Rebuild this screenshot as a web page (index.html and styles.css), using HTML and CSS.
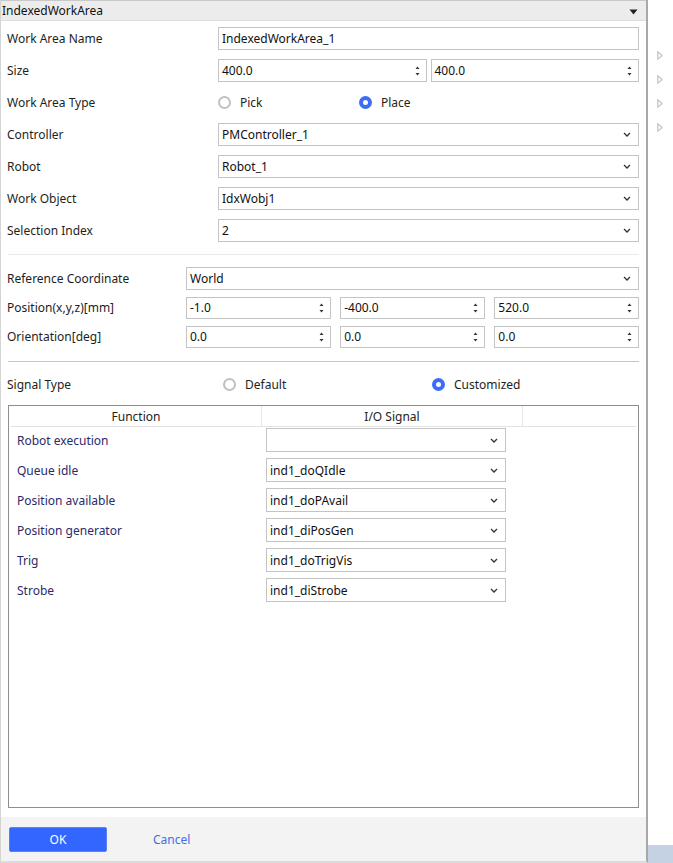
FILE: index.html
```html
<!DOCTYPE html>
<html>
<head>
<meta charset="utf-8">
<link rel="stylesheet" href="styles.css">
</head>
<body>
<div class="app">
  <div class="dialog">
    <div class="titlebar">
      <span class="title">IndexedWorkArea</span>
      <svg class="caret" width="9" height="6" viewBox="0 0 9 6"><path d="M0.5 0.5 L8.5 0.5 L4.5 5.5 Z" fill="#222"/></svg>
    </div>
    <div class="content">
      <div class="form form-a">
        <div class="label">Work Area Name</div>
        <div class="field">IndexedWorkArea_1</div>

        <div class="label">Size</div>
        <div class="pair">
          <div class="field spin">400.0<svg class="spinner" width="5" height="10" viewBox="0 0 5 10"><path d="M2.5 0.5 L4.5 3 L0.5 3 Z M2.5 9.5 L4.5 7 L0.5 7 Z" fill="#333"/></svg></div>
          <div class="field spin">400.0<svg class="spinner" width="5" height="10" viewBox="0 0 5 10"><path d="M2.5 0.5 L4.5 3 L0.5 3 Z M2.5 9.5 L4.5 7 L0.5 7 Z" fill="#333"/></svg></div>
        </div>

        <div class="label">Work Area Type</div>
        <div class="radios radios-a">
          <div class="radio opt-pick"><span class="dot"></span>Pick</div>
          <div class="radio"><span class="dot on"></span>Place</div>
        </div>

        <div class="label">Controller</div>
        <div class="field select">PMController_1<svg class="chev" width="8" height="5" viewBox="0 0 8 5"><path d="M1 1 L4 4 L7 1" fill="none" stroke="#333" stroke-width="1.3"/></svg></div>

        <div class="label">Robot</div>
        <div class="field select">Robot_1<svg class="chev" width="8" height="5" viewBox="0 0 8 5"><path d="M1 1 L4 4 L7 1" fill="none" stroke="#333" stroke-width="1.3"/></svg></div>

        <div class="label">Work Object</div>
        <div class="field select">IdxWobj1<svg class="chev" width="8" height="5" viewBox="0 0 8 5"><path d="M1 1 L4 4 L7 1" fill="none" stroke="#333" stroke-width="1.3"/></svg></div>

        <div class="label">Selection Index</div>
        <div class="field select">2<svg class="chev" width="8" height="5" viewBox="0 0 8 5"><path d="M1 1 L4 4 L7 1" fill="none" stroke="#333" stroke-width="1.3"/></svg></div>
      </div>

      <div class="sep sep-light"></div>

      <div class="form form-b">
        <div class="label">Reference Coordinate</div>
        <div class="field select">World<svg class="chev" width="8" height="5" viewBox="0 0 8 5"><path d="M1 1 L4 4 L7 1" fill="none" stroke="#333" stroke-width="1.3"/></svg></div>

        <div class="label">Position(x,y,z)[mm]</div>
        <div class="triple">
          <div class="field spin">-1.0<svg class="spinner" width="5" height="10" viewBox="0 0 5 10"><path d="M2.5 0.5 L4.5 3 L0.5 3 Z M2.5 9.5 L4.5 7 L0.5 7 Z" fill="#333"/></svg></div>
          <div class="field spin">-400.0<svg class="spinner" width="5" height="10" viewBox="0 0 5 10"><path d="M2.5 0.5 L4.5 3 L0.5 3 Z M2.5 9.5 L4.5 7 L0.5 7 Z" fill="#333"/></svg></div>
          <div class="field spin">520.0<svg class="spinner" width="5" height="10" viewBox="0 0 5 10"><path d="M2.5 0.5 L4.5 3 L0.5 3 Z M2.5 9.5 L4.5 7 L0.5 7 Z" fill="#333"/></svg></div>
        </div>

        <div class="label">Orientation[deg]</div>
        <div class="triple">
          <div class="field spin">0.0<svg class="spinner" width="5" height="10" viewBox="0 0 5 10"><path d="M2.5 0.5 L4.5 3 L0.5 3 Z M2.5 9.5 L4.5 7 L0.5 7 Z" fill="#333"/></svg></div>
          <div class="field spin">0.0<svg class="spinner" width="5" height="10" viewBox="0 0 5 10"><path d="M2.5 0.5 L4.5 3 L0.5 3 Z M2.5 9.5 L4.5 7 L0.5 7 Z" fill="#333"/></svg></div>
          <div class="field spin">0.0<svg class="spinner" width="5" height="10" viewBox="0 0 5 10"><path d="M2.5 0.5 L4.5 3 L0.5 3 Z M2.5 9.5 L4.5 7 L0.5 7 Z" fill="#333"/></svg></div>
        </div>
      </div>

      <div class="sep sep-dark"></div>

      <div class="signal-row">
        <div class="label">Signal Type</div>
        <div class="radio opt-default"><span class="dot"></span>Default</div>
        <div class="radio"><span class="dot on"></span>Customized</div>
      </div>

      <div class="table">
        <div class="thead">
          <div class="th">Function</div>
          <div class="th">I/O Signal</div>
          <div class="th"></div>
        </div>
        <div class="tbody">
          <div class="tr"><div class="td-label">Robot execution</div><div class="field select small"><svg class="chev" width="8" height="5" viewBox="0 0 8 5"><path d="M1 1 L4 4 L7 1" fill="none" stroke="#333" stroke-width="1.3"/></svg></div></div>
          <div class="tr"><div class="td-label">Queue idle</div><div class="field select small">ind1_doQIdle<svg class="chev" width="8" height="5" viewBox="0 0 8 5"><path d="M1 1 L4 4 L7 1" fill="none" stroke="#333" stroke-width="1.3"/></svg></div></div>
          <div class="tr"><div class="td-label">Position available</div><div class="field select small">ind1_doPAvail<svg class="chev" width="8" height="5" viewBox="0 0 8 5"><path d="M1 1 L4 4 L7 1" fill="none" stroke="#333" stroke-width="1.3"/></svg></div></div>
          <div class="tr"><div class="td-label">Position generator</div><div class="field select small">ind1_diPosGen<svg class="chev" width="8" height="5" viewBox="0 0 8 5"><path d="M1 1 L4 4 L7 1" fill="none" stroke="#333" stroke-width="1.3"/></svg></div></div>
          <div class="tr"><div class="td-label">Trig</div><div class="field select small">ind1_doTrigVis<svg class="chev" width="8" height="5" viewBox="0 0 8 5"><path d="M1 1 L4 4 L7 1" fill="none" stroke="#333" stroke-width="1.3"/></svg></div></div>
          <div class="tr"><div class="td-label">Strobe</div><div class="field select small">ind1_diStrobe<svg class="chev" width="8" height="5" viewBox="0 0 8 5"><path d="M1 1 L4 4 L7 1" fill="none" stroke="#333" stroke-width="1.3"/></svg></div></div>
        </div>
      </div>
    </div>
    <div class="footer">
      <button class="btn-ok">OK</button>
      <button class="btn-cancel">Cancel</button>
    </div>
  </div>
  <div class="side">
    <div class="side-items">
      <svg class="tri" width="6" height="9" viewBox="0 0 6 9"><path d="M0.8 0.8 L5.2 4.5 L0.8 8.2 Z" fill="none" stroke="#c4c4c4" stroke-width="1.2"/></svg>
      <svg class="tri" width="6" height="9" viewBox="0 0 6 9"><path d="M0.8 0.8 L5.2 4.5 L0.8 8.2 Z" fill="none" stroke="#c4c4c4" stroke-width="1.2"/></svg>
      <svg class="tri" width="6" height="9" viewBox="0 0 6 9"><path d="M0.8 0.8 L5.2 4.5 L0.8 8.2 Z" fill="none" stroke="#c4c4c4" stroke-width="1.2"/></svg>
      <svg class="tri" width="6" height="9" viewBox="0 0 6 9"><path d="M0.8 0.8 L5.2 4.5 L0.8 8.2 Z" fill="none" stroke="#c4c4c4" stroke-width="1.2"/></svg>
    </div>
    <div class="side-bottom"></div>
  </div>
</div>
</body>
</html>
```

FILE: styles.css
```css
* { box-sizing: border-box; }
html, body { margin: 0; padding: 0; }
body {
  font-family: "Noto Sans", "Open Sans", sans-serif;
  font-size: 12px;
  color: #1e1e1e;
  background: #fff;
}
.app {
  display: flex;
  width: 673px;
  height: 863px;
}
.dialog {
  width: 648px;
  height: 863px;
  display: flex;
  flex-direction: column;
  border-left: 1px solid #d4d4d4;
  border-right: 2px solid #a8a8a8;
  border-bottom: 2px solid #dcdcdc;
}
.titlebar {
  height: 21px;
  background: #ececec;
  border-top: 1px solid #c8c8c8;
  border-bottom: 1px solid #dedede;
  display: flex;
  align-items: center;
  justify-content: space-between;
  padding: 0 8px 0 1px;
}
.title { font-size: 12px; color: #111; }
.caret { margin-top: 3px; }
.content {
  flex: 1;
  display: flex;
  flex-direction: column;
  padding: 6px 7px 9px 6px;
  background: #fff;
}
.form {
  display: grid;
  grid-auto-rows: 23px;
  align-items: center;
}
.form-a {
  grid-template-columns: 211px 1fr;
  row-gap: 9px;
}
.form-b {
  grid-template-columns: 179px 1fr;
  row-gap: 6px;
}
.label { color: #1e1e1e; }
.field {
  height: 23px;
  border: 1px solid #c4c4c4;
  background: #fff;
  display: flex;
  align-items: center;
  padding: 0 0 0 3px;
  position: relative;
  color: #111;
}
.spin { justify-content: space-between; padding-right: 6px; }
.select { justify-content: space-between; padding-right: 7px; }
.chev { flex: none; margin-left: auto; }
.spinner { flex: none; }
.pair {
  display: grid;
  grid-template-columns: 1fr 1fr;
  column-gap: 4px;
}
.triple {
  display: grid;
  grid-template-columns: 1fr 1fr 1fr;
  column-gap: 9.5px;
}
.form-b .triple .field { height: 22px; }
.radios { display: flex; align-items: center; }
.radio { display: flex; align-items: center; color: #1e1e1e; }
.dot {
  width: 13px;
  height: 13px;
  border-radius: 50%;
  border: 2px solid #c0c0c0;
  background: #fff;
  margin-right: 9px;
  flex: none;
}
.dot.on {
  border: 4px solid #3d6cf5;
  background: #fff;
}
.opt-pick { width: 141px; }
.sep { height: 1px; margin: 12px 0 12px 1px; }
.sep-light { background: #e9e9e9; }
.sep-dark { background: #c6c6c6; margin: 13px 0 11px 1px; }
.signal-row {
  display: flex;
  align-items: center;
  height: 23px;
}
.signal-row .label { width: 216px; }
.opt-default { width: 209px; }
.table {
  flex: 1;
  margin-top: 9px;
  margin-left: 1px;
  border: 1px solid #8e8e8e;
  display: flex;
  flex-direction: column;
}
.thead {
  display: grid;
  grid-template-columns: 251px 261px 1fr;
  height: 21px;
  margin: 0 2px;
  border-bottom: 1px solid #e2e2e2;
}
.th {
  display: flex;
  align-items: center;
  justify-content: center;
  border-right: 1px solid #e6e6e6;
  color: #222;
  font-size: 12px;
}
.th:last-child { border-right: none; }
.tbody {
  display: flex;
  flex-direction: column;
  gap: 7px;
  padding-top: 1px;
}
.tr {
  display: grid;
  grid-template-columns: 257px 240px;
  align-items: center;
  height: 23px;
}
.td-label { padding-left: 8px; color: #2a2a6a; }
.field.small { height: 24px; }
.footer {
  height: 44px;
  background: #f3f3f3;
  display: flex;
  align-items: center;
  padding: 0 0 0 8px;
}
.btn-ok {
  width: 98px;
  height: 25px;
  background: #3366ff;
  border: 1px solid #5b82f0;
  border-radius: 2px;
  color: #fff;
  font-family: "Noto Sans", sans-serif;
  font-size: 12px;
  padding: 0;
}
.btn-cancel {
  margin-left: 46px;
  background: none;
  border: none;
  color: #3f6ee8;
  font-family: "Noto Sans", sans-serif;
  font-size: 12px;
  padding: 0;
}
.side {
  flex: 1;
  display: flex;
  flex-direction: column;
  background: #fff;
}
.side-items {
  flex: 1;
  display: flex;
  flex-direction: column;
  gap: 15px;
  padding: 51px 0 0 9px;
}
.side-bottom {
  height: 18px;
  background: #c5d2e3;
}
```
